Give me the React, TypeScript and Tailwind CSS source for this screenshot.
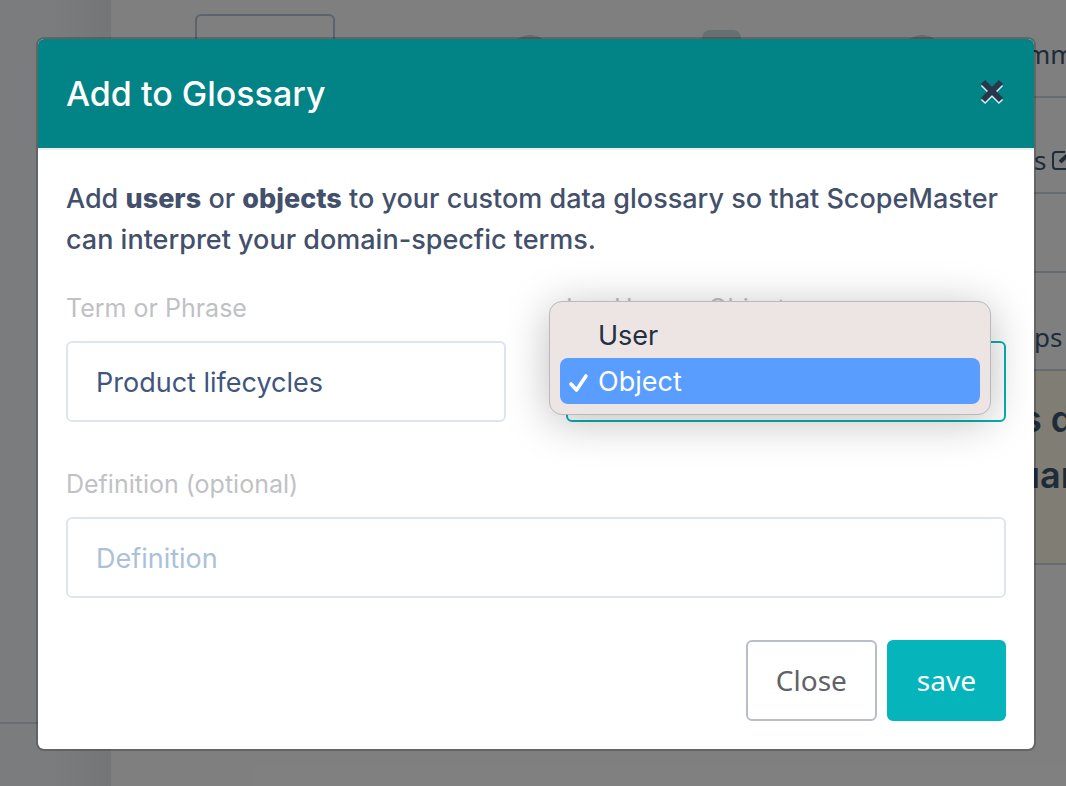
import { useState } from 'react';

const inputClass =
  'block h-[81px] w-full rounded-md border-2 border-[#dfe5f0] bg-white px-7 pt-0.5 text-[27px] text-[#40567d] outline-none placeholder:text-[#abc1d9]';
const labelClass = 'mb-[13px] block h-[38px] text-[25px] leading-[37px] text-[#bfc1c5]';

function Backdrop() {
  return (
    <div className="flex h-full overflow-hidden bg-white text-[#3d5875]" aria-hidden="true">
      <aside className="flex w-[111px] shrink-0 flex-col bg-linear-to-r from-[#f6f8fa] from-50% to-[#e9ebef]">
        <div className="h-[722px] shrink-0" />
        <div className="border-t-2 border-[#d0dde6]" />
      </aside>
      <main className="flex min-w-0 flex-1 flex-col">
        <div className="flex h-[98px] shrink-0 items-start border-b-2 border-[#cbd8e3]">
          <div className="mt-3.5 ml-[84px] h-14 w-[140px] shrink-0 rounded-md border-2 border-[#b6c9da]" />
          <div className="mt-[35px] ml-[173px] h-11 w-11 shrink-0 rounded-full bg-[#d5d5dc]" />
          <div className="mt-[30px] ml-[150px] h-10 w-[39px] shrink-0 rounded-lg bg-[#d0dfe3]" />
          <div className="mt-[35px] ml-[159px] h-11 w-11 shrink-0 rounded-full bg-[#d5d5dc]" />
          <span className="mt-9 ml-auto w-10 font-['Noto_Sans',sans-serif] text-[26px] leading-9">mm</span>
        </div>
        <div className="ml-auto flex w-8 shrink-0 flex-col font-['Noto_Sans',sans-serif] text-[26px] leading-9">
          <div className="flex h-24 items-center gap-1.5 border-b-2 border-[#cbd8e3] pt-[30px]">
            <span>s</span>
            <svg className="h-5 w-5 shrink-0" viewBox="0 0 20 20" fill="none" stroke="currentColor" strokeWidth="2">
              <path d="M13 2H4a3 3 0 0 0-3 3v11a3 3 0 0 0 3 3h11a3 3 0 0 0 3-3V9" />
              <path d="M8 12 18 3" strokeWidth="4" />
            </svg>
          </div>
          <div className="h-[79px] border-b-2 border-[#cbd8e3]" />
          <div className="h-[98px] border-b-2 border-[#cbd8e3] pt-[46px]">ps</div>
          <div className="h-[194px] border-b-2 border-[#cbd8e3] bg-[#fffae8] pt-5 font-['Inter',sans-serif] text-[36px] leading-[56px] font-semibold">
            <div className="-ml-3 whitespace-nowrap">s d</div>
            <div className="-ml-4 whitespace-nowrap">uar</div>
          </div>
        </div>
      </main>
    </div>
  );
}

function CloseIcon() {
  return (
    <svg className="h-7 w-7" viewBox="0 0 28 28" fill="none" strokeWidth="6">
      <path d="M5 7 23 25M23 7 5 25" stroke="#d9f2f5" />
      <path d="M5 5 23 23M23 5 5 23" stroke="#27384b" />
    </svg>
  );
}

const kinds = ['User', 'Object'];

export default function App() {
  const [kind, setKind] = useState('Object');
  const [term, setTerm] = useState('Product lifecycles');

  return (
    <div className="relative h-screen min-h-[786px] overflow-hidden font-['Inter',sans-serif]">
      <Backdrop />
      <div className="absolute inset-0 bg-black/50 pt-[37px] pr-[30px] pl-9">
        <div
          role="dialog"
          aria-labelledby="title"
          className="rounded-lg border-2 border-black/20 bg-white bg-clip-padding"
        >
          <header className="flex items-start justify-between rounded-t-md border-b-2 border-[#eceeef] bg-[#028385] bg-clip-padding px-7 py-7">
            <h1 id="title" className="text-[34px] leading-[53px] font-medium text-white">
              Add to Glossary
            </h1>
            <button type="button" aria-label="Dismiss" className="mt-2.5">
              <CloseIcon />
            </button>
          </header>

          <form className="p-7" onSubmit={(e) => e.preventDefault()}>
            <p className="text-[27px] leading-[41px] font-medium text-[#43506b]">
              Add <strong className="font-extrabold">users</strong> or{' '}
              <strong className="font-extrabold">objects</strong> to your custom data glossary so that ScopeMaster can
              interpret your domain-specfic terms.
            </p>

            <div className="mt-[30px] grid grid-cols-2 gap-[60px]">
              <div>
                <label htmlFor="term" className={labelClass}>
                  Term or Phrase
                </label>
                <input id="term" className={inputClass} value={term} onChange={(e) => setTerm(e.target.value)} />
              </div>
              <div className="relative">
                <label htmlFor="kind" className={labelClass}>
                  Is a User or Object
                </label>
                <select
                  id="kind"
                  value={kind}
                  onChange={(e) => setKind(e.target.value)}
                  className="block h-[81px] w-full appearance-none rounded-md border-2 border-[#05b0b3] bg-white px-7 text-[27px] text-[#40567d] outline-none"
                >
                  {kinds.map((k) => (
                    <option key={k}>{k}</option>
                  ))}
                </select>
                <ul
                  role="listbox"
                  aria-label="Kind"
                  className="absolute top-[11px] right-[15px] -left-[17px] rounded-[13px] border border-[#b9b9bd] bg-[#ede5e4] p-2.5 shadow-[0_6px_44px_rgba(0,0,0,0.26)]"
                >
                  {kinds.map((k) => (
                    <li
                      key={k}
                      role="option"
                      aria-selected={k === kind}
                      onClick={() => setKind(k)}
                      className={
                        k === kind
                          ? 'flex h-[46px] items-center rounded-lg bg-[#589dff] pt-[3px] text-[27px] text-white'
                          : 'flex h-[46px] items-center rounded-lg pt-[3px] text-[27px] text-[#22303f]'
                      }
                    >
                      <span className="w-[38px] shrink-0 pl-2">
                        {k === kind && (
                          <svg
                            className="h-6 w-6"
                            viewBox="0 0 24 24"
                            fill="none"
                            stroke="currentColor"
                            strokeWidth="3.6"
                            strokeLinecap="round"
                            strokeLinejoin="round"
                          >
                            <path d="M3 13 8.500 19 18 5" />
                          </svg>
                        )}
                      </span>
                      {k}
                    </li>
                  ))}
                </ul>
              </div>
            </div>

            <div className="mt-11">
              <label htmlFor="definition" className={labelClass}>
                Definition (optional)
              </label>
              <input id="definition" className={inputClass} placeholder="Definition" />
            </div>

            <div className="mt-[42px] flex justify-end gap-2.5 font-['Noto_Sans',sans-serif] text-[28px]">
              <button
                type="button"
                className="h-[81px] rounded-md border-2 border-[#b7bec9] bg-white px-7 pb-0.5 text-[#5f6267]"
              >
                Close
              </button>
              <button
                type="submit"
                className="h-[81px] rounded-md border-2 border-[#05b5bb] bg-[#05b5bb] px-7 pb-0.5 text-white"
              >
                save
              </button>
            </div>
          </form>
        </div>
      </div>
    </div>
  );
}
